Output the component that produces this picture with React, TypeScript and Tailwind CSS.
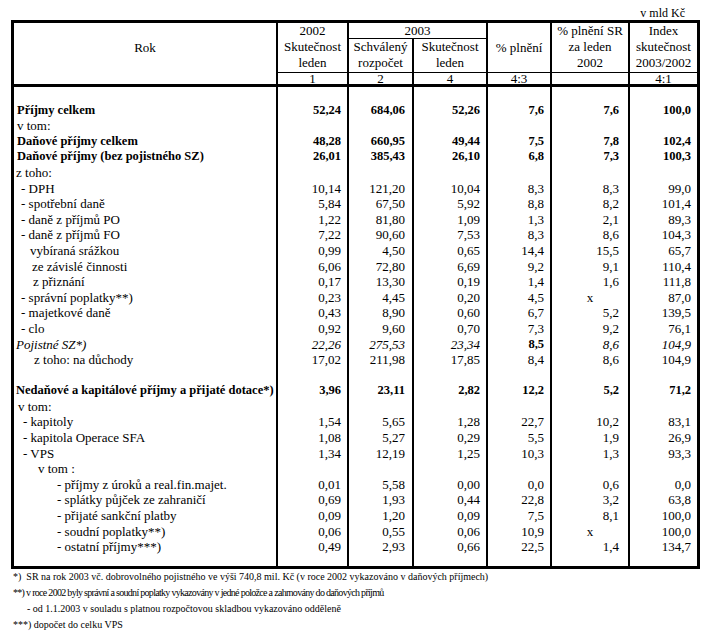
import React from "react";

type Row = {
  label?: string;
  ind?: string;
  st?: "b" | "i";
  v?: string[];
  vs?: string[];
};

const GRID = "grid grid-cols-[262px_71px_65px_74px_64px_78px_69px]";
const PAD = ["pr-[6px]", "pr-[7px]", "pr-[6px]", "pr-[6px]", "pr-[9px]", "pr-[6px]"];

const rows: Row[] = [
  {},
  { label: "Příjmy celkem", ind: "pl-[3px]", st: "b", v: ["52,24", "684,06", "52,26", "7,6", "7,6", "100,0"] },
  { label: "v tom:", ind: "pl-[3px]" },
  { label: "Daňové příjmy celkem", ind: "pl-[3px]", st: "b", v: ["48,28", "660,95", "49,44", "7,5", "7,8", "102,4"] },
  { label: "Daňové příjmy (bez pojistného SZ)", ind: "pl-[3px]", st: "b", v: ["26,01", "385,43", "26,10", "6,8", "7,3", "100,3"] },
  { label: "z toho:", ind: "pl-[2px]" },
  { label: "- DPH", ind: "pl-[7px]", v: ["10,14", "121,20", "10,04", "8,3", "8,3", "99,0"] },
  { label: "- spotřební daně", ind: "pl-[7px]", v: ["5,84", "67,50", "5,92", "8,8", "8,2", "101,4"] },
  { label: "- daně z příjmů PO", ind: "pl-[7px]", v: ["1,22", "81,80", "1,09", "1,3", "2,1", "89,3"] },
  { label: "- daně z příjmů FO", ind: "pl-[7px]", v: ["7,22", "90,60", "7,53", "8,3", "8,6", "104,3"] },
  { label: "vybíraná srážkou", ind: "pl-[16px]", v: ["0,99", "4,50", "0,65", "14,4", "15,5", "65,7"] },
  { label: "ze závislé činnosti", ind: "pl-[18px]", v: ["6,06", "72,80", "6,69", "9,2", "9,1", "110,4"] },
  { label: "z přiznání", ind: "pl-[19px]", v: ["0,17", "13,30", "0,19", "1,4", "1,6", "111,8"] },
  { label: "- správní poplatky**)", ind: "pl-[7px]", v: ["0,23", "4,45", "0,20", "4,5", "x", "87,0"] },
  { label: "- majetkové daně", ind: "pl-[7px]", v: ["0,43", "8,90", "0,60", "6,7", "5,2", "139,5"] },
  { label: "- clo", ind: "pl-[7px]", v: ["0,92", "9,60", "0,70", "7,3", "9,2", "76,1"] },
  { label: "Pojistné SZ*)", ind: "pl-[2px]", st: "i", v: ["22,26", "275,53", "23,34", "8,5", "8,6", "104,9"], vs: ["i", "i", "i", "b", "i", "i"] },
  { label: "z toho: na důchody", ind: "pl-[20px]", v: ["17,02", "211,98", "17,85", "8,4", "8,6", "104,9"] },
  {},
  { label: "Nedaňové a kapitálové příjmy a přijaté dotace*)", ind: "pl-[2px]", st: "b", v: ["3,96", "23,11", "2,82", "12,2", "5,2", "71,2"] },
  { label: "v tom:", ind: "pl-[4px]" },
  { label: "- kapitoly", ind: "pl-[9px]", v: ["1,54", "5,65", "1,28", "22,7", "10,2", "83,1"] },
  { label: "- kapitola Operace SFA", ind: "pl-[9px]", v: ["1,08", "5,27", "0,29", "5,5", "1,9", "26,9"] },
  { label: "- VPS", ind: "pl-[9px]", v: ["1,34", "12,19", "1,25", "10,3", "1,3", "93,3"] },
  { label: "v tom :", ind: "pl-[24px]" },
  { label: "- příjmy z úroků a real.fin.majet.", ind: "pl-[43px]", v: ["0,01", "5,58", "0,00", "0,0", "0,6", "0,0"] },
  { label: "- splátky půjček ze zahraničí", ind: "pl-[43px]", v: ["0,69", "1,93", "0,44", "22,8", "3,2", "63,8"] },
  { label: "- přijaté sankční platby", ind: "pl-[43px]", v: ["0,09", "1,20", "0,09", "7,5", "8,1", "100,0"] },
  { label: "- soudní poplatky**)", ind: "pl-[43px]", v: ["0,06", "0,55", "0,06", "10,9", "x", "100,0"] },
  { label: "- ostatní příjmy***)", ind: "pl-[43px]", v: ["0,49", "2,93", "0,66", "22,5", "1,4", "134,7"] },
];

function styleOf(s?: string) {
  if (s === "b") return "font-bold text-[12.5px]";
  if (s === "i") return "italic";
  return "";
}

function BodyRow({ row }: { row: Row }) {
  return (
    <div className={`${GRID} h-[15.6px] leading-[15.6px]`}>
      <div className={`whitespace-nowrap ${row.ind ?? ""} ${styleOf(row.st)}`}>{row.label}</div>
      {PAD.map((pad, i) => {
        const val = row.v?.[i] ?? "";
        const s = row.vs ? row.vs[i] : row.st;
        return (
          <div
            key={i}
            className={`border-l-2 border-black whitespace-nowrap ${
              val === "x" ? "text-center" : `text-right ${pad}`
            } ${styleOf(s)}`}
          >
            {val}
          </div>
        );
      })}
    </div>
  );
}

function Header() {
  return (
    <div className={`${GRID} h-[64px] border-b-[3px] border-black text-center`}>
      <div className="flex flex-col">
        <div className="h-[49px] flex items-center justify-center">Rok</div>
      </div>
      <div className="border-l-2 border-black flex flex-col">
        <div className="h-[49px] leading-[16px]">
          <div>2002</div>
          <div>Skutečnost</div>
          <div>leden</div>
        </div>
        <div className="border-t border-black h-[12px] leading-[11px]">1</div>
      </div>
      <div className="col-span-2 border-l-2 border-black flex flex-col">
        <div className="h-[16px] leading-[16px] border-b border-black">2003</div>
        <div className="grid grid-cols-[63px_74px] h-[33px] leading-[16px]">
          <div>
            <div>Schválený</div>
            <div>rozpočet</div>
          </div>
          <div className="border-l-2 border-black">
            <div>Skutečnost</div>
            <div>leden</div>
          </div>
        </div>
        <div className="grid grid-cols-[63px_74px] border-t border-black h-[12px] leading-[11px]">
          <div>2</div>
          <div className="border-l-2 border-black">4</div>
        </div>
      </div>
      <div className="border-l-2 border-black flex flex-col">
        <div className="h-[49px] flex items-center justify-center">% plnění</div>
        <div className="border-t border-black h-[12px] leading-[11px]">4:3</div>
      </div>
      <div className="border-l-2 border-black flex flex-col">
        <div className="h-[49px] leading-[16px]">
          <div>% plnění SR</div>
          <div>za leden</div>
          <div>2002</div>
        </div>
        <div className="border-t border-black h-[12px]" />
      </div>
      <div className="border-l-2 border-black flex flex-col">
        <div className="h-[49px] leading-[16px]">
          <div>Index</div>
          <div>skutečnost</div>
          <div>2003/2002</div>
        </div>
        <div className="border-t border-black h-[12px] leading-[11px]">4:1</div>
      </div>
    </div>
  );
}

export default function App() {
  return (
    <div className="w-[708px] h-[638px] bg-white text-black [font-family:'Liberation_Serif','Times_New_Roman',serif] text-[13px]">
      <div className="pl-[11px] pt-[7px]">
        <div className="w-[689px] h-[13px] leading-[13px] text-[12px] text-right pr-[15px]">v mld Kč</div>
        <div className="w-[689px] border-[3px] border-black">
          <Header />
          {rows.map((r, i) => (
            <BodyRow key={i} row={r} />
          ))}
          <div className={`${GRID} h-[11px]`}>
            <div />
            <div className="border-l-2 border-black" />
            <div className="border-l-2 border-black" />
            <div className="border-l-2 border-black" />
            <div className="border-l-2 border-black" />
            <div className="border-l-2 border-black" />
            <div className="border-l-2 border-black" />
          </div>
        </div>
        <div className="text-[10px] leading-[16px] pl-[2px] whitespace-nowrap">
          <div>*)&nbsp; SR na rok 2003 vč. dobrovolného pojistného ve výši 740,8 mil. Kč (v roce 2002 vykazováno v daňových příjmech)</div>
          <div className="tracking-[-0.7px]">**) v roce 2002 byly správní a soudní poplatky vykazovány v jedné položce a zahrnovány do daňových příjmů</div>
          <div className="pl-[14px]">- od 1.1.2003 v souladu s platnou rozpočtovou skladbou vykazováno odděleně</div>
          <div>***) dopočet do celku VPS</div>
        </div>
      </div>
    </div>
  );
}
